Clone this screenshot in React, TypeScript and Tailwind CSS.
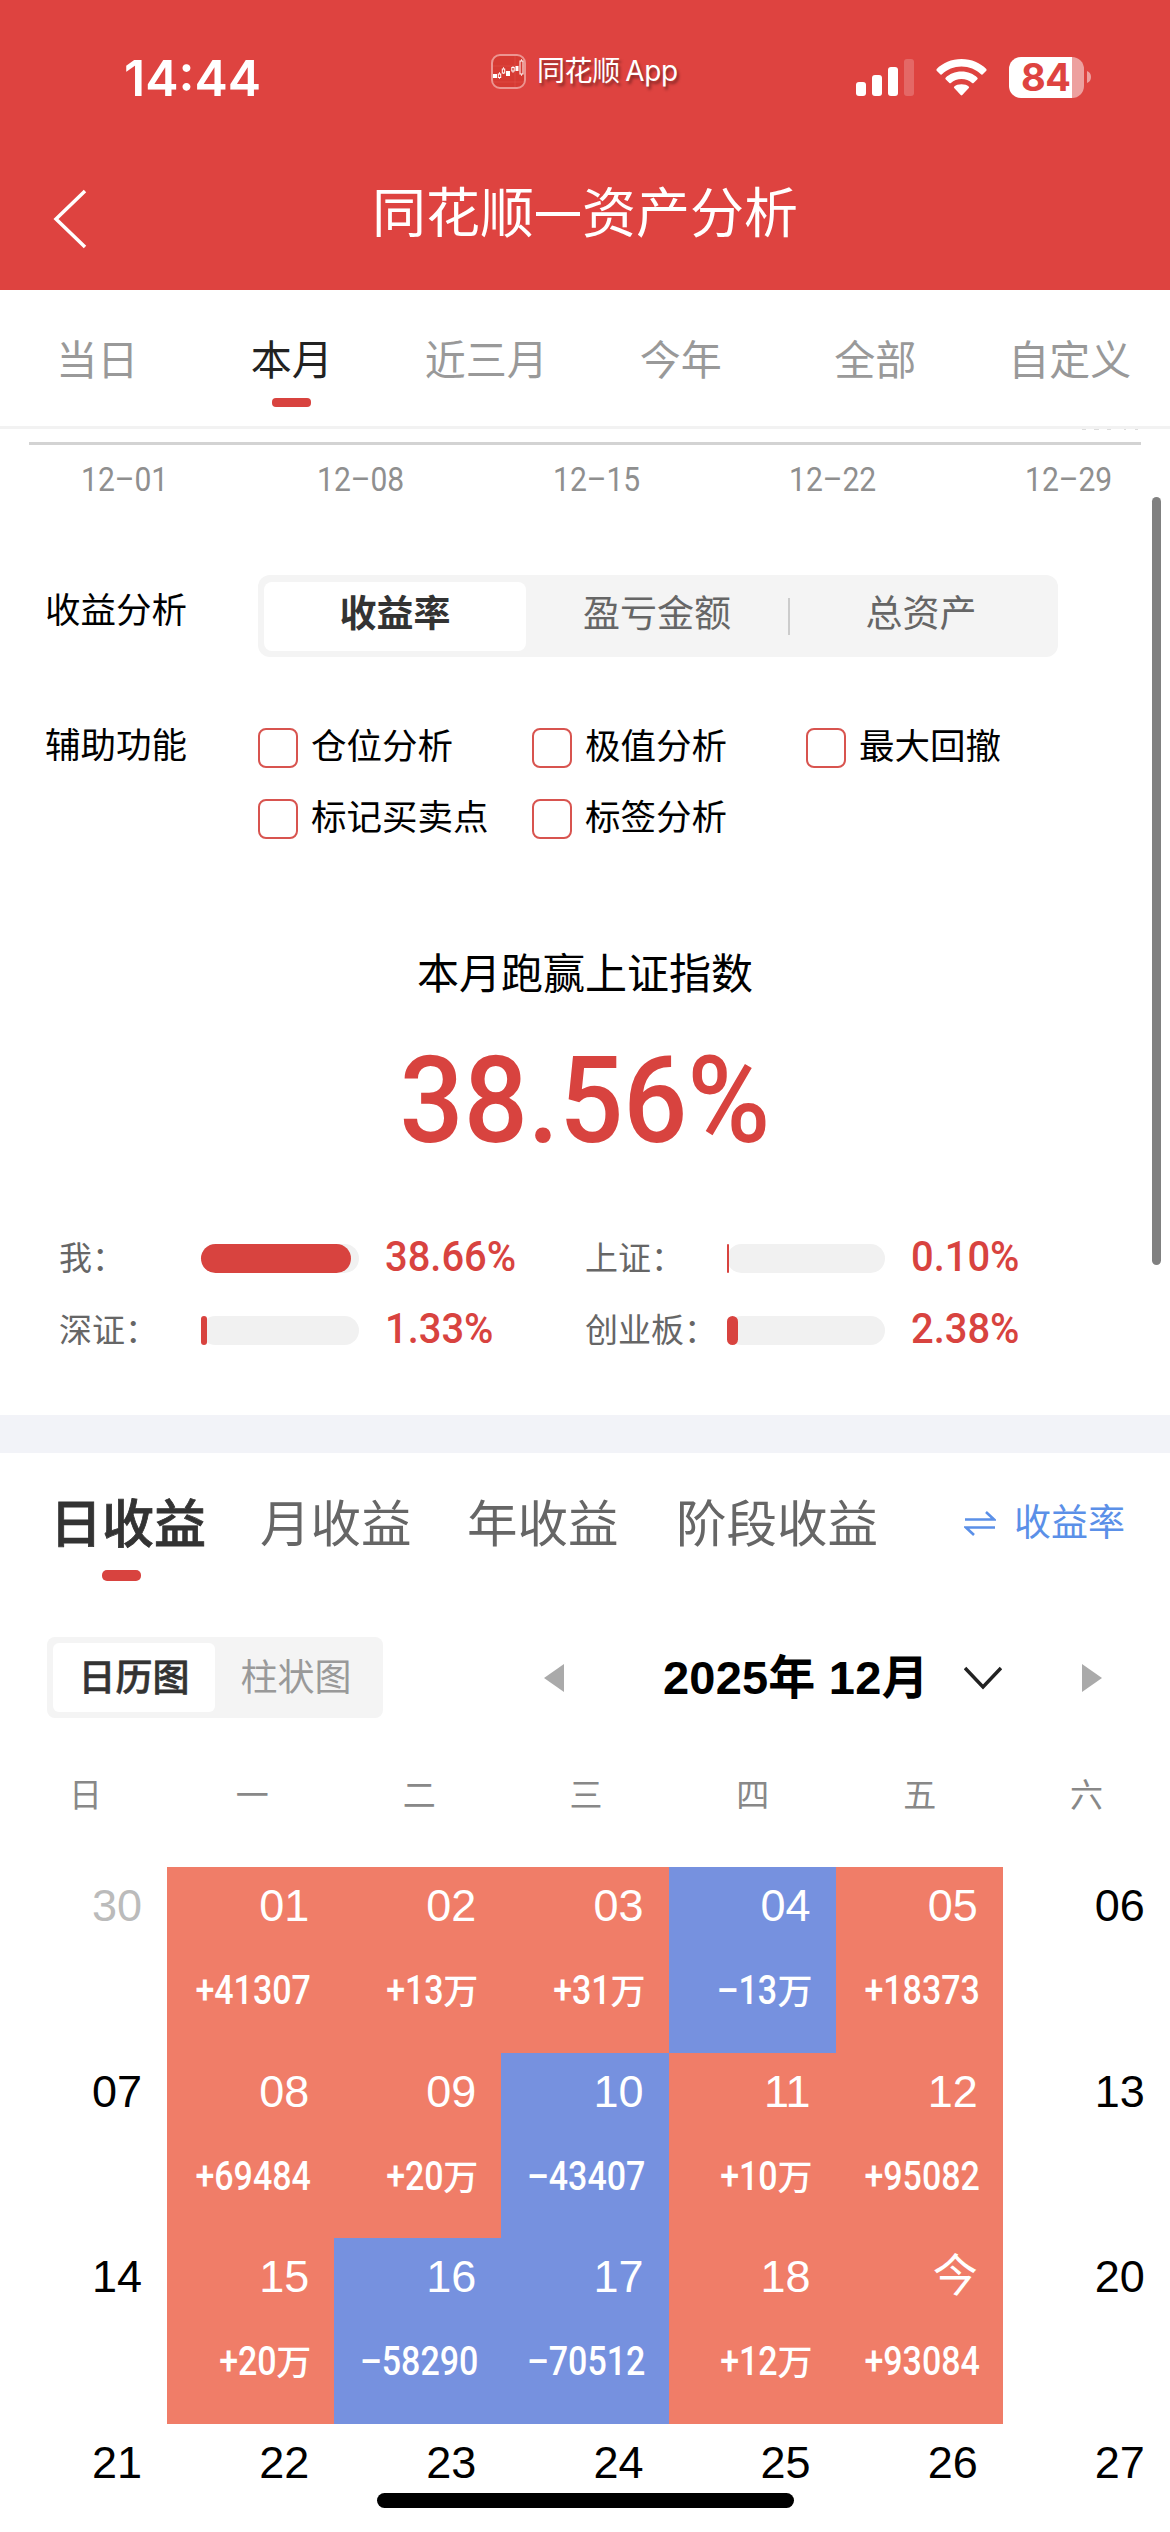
import clsx from 'clsx';

const PERIODS = ['当日', '本月', '近三月', '今年', '全部', '自定义'];
const DATES = ['12–01', '12–08', '12–15', '12–22', '12–29'];
const HELPERS = ['仓位分析', '极值分析', '最大回撤', '标记买卖点', '标签分析'];
const WEEKDAYS = ['日', '一', '二', '三', '四', '五', '六'];

type Index = { name: string; value: string; width: number };

const INDEXES: Index[] = [
  { name: '我：', value: '38.66%', width: 150 },
  { name: '上证：', value: '0.10%', width: 2 },
  { name: '深证：', value: '1.33%', width: 6 },
  { name: '创业板：', value: '2.38%', width: 11 },
];

type Day = { day: string; amount?: string; muted?: boolean };

const DAYS: Day[] = [
  { day: '30', muted: true },
  { day: '01', amount: '+41307' },
  { day: '02', amount: '+13万' },
  { day: '03', amount: '+31万' },
  { day: '04', amount: '–13万' },
  { day: '05', amount: '+18373' },
  { day: '06' },
  { day: '07' },
  { day: '08', amount: '+69484' },
  { day: '09', amount: '+20万' },
  { day: '10', amount: '–43407' },
  { day: '11', amount: '+10万' },
  { day: '12', amount: '+95082' },
  { day: '13' },
  { day: '14' },
  { day: '15', amount: '+20万' },
  { day: '16', amount: '–58290' },
  { day: '17', amount: '–70512' },
  { day: '18', amount: '+12万' },
  { day: '今', amount: '+93084' },
  { day: '20' },
  { day: '21' },
  { day: '22' },
  { day: '23' },
  { day: '24' },
  { day: '25' },
  { day: '26' },
  { day: '27' },
];

export default function App() {
  return (
    <div className="relative flex h-[2532px] w-[1170px] flex-col overflow-hidden bg-white font-['Inter','Noto_Sans_CJK_SC',sans-serif] leading-none whitespace-nowrap text-black">
      <header className="h-[290px] shrink-0 bg-[#de4340] text-white">
        <StatusBar />
        <NavBar />
      </header>
      <PeriodTabs />
      <ChartAxis />
      <AnalysisOptions />
      <Outperform />
      <div className="h-[38px] shrink-0 bg-[#f2f3f8]" />
      <IncomeTabs />
      <CalendarToolbar />
      <Calendar />
      <div className="absolute top-[497px] left-[1152px] h-[768px] w-[9px] rounded-full bg-[#808080]" />
      <div className="absolute bottom-[24px] left-[377px] h-[15px] w-[417px] rounded-full bg-black" />
    </div>
  );
}

function StatusBar() {
  return (
    <div className="flex h-[154px] items-start">
      <div className="w-[491px] pt-[53px] pl-[124px] text-[50px] font-semibold">14:44</div>
      <div className="flex w-[365px] items-center pt-[53px]">
        <AppIcon />
        <span className="ml-[11px] text-[28px] leading-[36px] tracking-[-0.400px] [text-shadow:2px_3px_3px_rgba(0,0,0,0.4)] [word-spacing:-2px]">
          同花顺 App
        </span>
      </div>
      <div className="flex pt-[57px]">
        <svg width="58" height="41" viewBox="0 0 58 41" fill="#fff">
          <rect x="0" y="25" width="10" height="14" rx="3" />
          <rect x="16" y="18" width="10" height="21" rx="3" />
          <rect x="32" y="10" width="10" height="29" rx="3" />
          <rect x="48" y="2" width="10" height="37" rx="3" opacity="0.2" />
        </svg>
        <svg className="ml-[22px]" width="51" height="41" viewBox="0 0 51 41" fill="#fff">
          <path d="M25.500 2C35.500 2 44.500 6 50.300 12Q51 13 50.300 13.800L46.500 17.400Q45.700 18 45 17.300C40 12.400 33 9.500 25.500 9.500S11 12.400 6 17.300Q5.300 18 4.500 17.400L.7 13.800Q0 13 .7 12C6.500 6 15.500 2 25.500 2Z" />
          <path d="M25.500 14.600C32 14.600 37.500 17 41.400 20.800Q42 21.600 41.400 22.300L37.600 26Q36.900 26.700 36.100 26C33.300 23.500 29.500 22.100 25.500 22.100S17.700 23.500 14.900 26Q14.100 26.700 13.400 26L9.600 22.300Q9 21.600 9.600 20.800C13.500 17 19 14.600 25.500 14.600Z" />
          <path d="M25.500 27.200C28.600 27.200 31 28 32.700 29.400Q33.500 30.200 32.800 31L26.300 38Q25.500 38.800 24.700 38L18.200 31Q17.500 30.200 18.300 29.400C20 28 22.400 27.200 25.500 27.200Z" />
        </svg>
        <div className="ml-[22px] h-[41px] w-[75px] rounded-[12px] bg-[linear-gradient(to_right,#fff_63px,#eda09f_63px)] pl-[12px] text-[38px] leading-[41px] font-bold tracking-[-0.5px] text-[#de4340]">
          84
        </div>
        <svg className="mt-[14px] ml-[3px]" width="4" height="12" viewBox="0 0 4 12" fill="#eda09f">
          <path d="M0 0Q4 1.500 4 6T0 12Z" />
        </svg>
      </div>
    </div>
  );
}

function AppIcon() {
  return (
    <svg width="35" height="35" viewBox="0 0 35 35" fill="none">
      <rect x="1" y="1" width="33" height="33" rx="8" fill="#d63a33" stroke="#ec9591" strokeWidth="2" />
      <path d="M2 12H33M2 28H33M24 2V33" stroke="#e0524c" strokeWidth="0.600" />
      <g fill="#fff">
        <rect x="2" y="20" width="4" height="4" />
        <rect x="15" y="17" width="4" height="5" />
        <rect x="24.500" y="12" width="3" height="5" />
      </g>
      <g stroke="#fff" strokeWidth="1">
        <path d="M8.500 18V25M12.500 13V20M22 12V19M30.500 5V22" strokeWidth="0.700" />
        <rect x="7.300" y="20" width="2.400" height="3.500" fill="#d63a33" />
        <rect x="11.300" y="15" width="2.400" height="4" fill="#d63a33" />
        <rect x="20.800" y="13.500" width="2.400" height="3.500" fill="#d63a33" />
        <rect x="29" y="7" width="3" height="13" fill="#d63a33" />
      </g>
    </svg>
  );
}

function NavBar() {
  return (
    <div className="flex h-[120px] items-center">
      <svg className="mt-[10px] ml-[53px]" width="35" height="60" viewBox="0 0 35 60" fill="none">
        <path d="M32 2L3 30L32 58" stroke="#fff" strokeWidth="3.500" />
      </svg>
      <h1 className="ml-[284px] flex items-center text-[54px]">
        同花顺
        <span className="mx-[2px] h-[4px] w-[44px] bg-white" />
        资产分析
      </h1>
    </div>
  );
}

function PeriodTabs() {
  return (
    <nav className="grid h-[139px] shrink-0 grid-cols-[repeat(6,194.500px)] border-b-[3px] border-[#f2f2f2] text-[41px] text-[#999]">
      {PERIODS.map((label) => {
        const active = label === '本月';
        return (
          <div key={label} className={clsx('flex flex-col items-center pt-[50px]', active && 'text-[#222]')}>
            {label}
            {active && <span className="mt-[17px] h-[9px] w-[39px] rounded-[4px] bg-[#d8433f]" />}
          </div>
        );
      })}
    </nav>
  );
}

function ChartAxis() {
  return (
    <div className="h-[146px] shrink-0 px-[29px]">
      {/* tail of the last axis value, scrolled under the tabs */}
      <svg className="ml-[1052px]" width="58" height="13" viewBox="0 0 58 13" fill="#ddd">
        <path d="M1 0h4v1h-4zM13 0h5v1h-5zM26 0h4v1h-4zM43 0h2v1h-2zM54 0h3v1h-3z" />
      </svg>
      <div className="flex justify-between border-t-[3px] border-[#d3d3d3] pt-[18px] pr-[32px] pl-[52px] font-['Roboto',sans-serif] text-[33px] text-[#8f8f8f]">
        {DATES.map((date) => (
          <span key={date} className="w-[84px] origin-left scale-x-[0.910]">
            {date}
          </span>
        ))}
      </div>
    </div>
  );
}

function AnalysisOptions() {
  return (
    <section className="h-[353px] shrink-0 pl-[45px] text-[35.500px]">
      <div className="flex h-[82px] items-center">
        <span className="w-[213px] pb-[11px]">收益分析</span>
        <div className="flex h-[82px] w-[800px] items-center rounded-[12px] bg-[#f4f4f4] p-[6px] text-[37px] text-[#666]">
          <span className="flex h-[69px] w-[262px] items-center justify-center rounded-[8px] bg-white pb-[6px] font-bold text-[#333]">
            收益率
          </span>
          <span className="flex-1 pb-[6px] text-center">盈亏金额</span>
          <span className="h-[37px] w-[2px] bg-[#ccc]" />
          <span className="flex-1 pb-[6px] text-center">总资产</span>
        </div>
      </div>
      <div className="mt-[71px] flex">
        <span className="w-[213px]">辅助功能</span>
        <div className="grid grid-cols-[274px_274px_274px] gap-y-[31px]">
          {HELPERS.map((label) => (
            <label key={label} className="flex h-[40px] items-center gap-[13px]">
              <span className="size-[40px] rounded-[8px] border-2 border-[#d8544f]" />
              <span className="pb-[3px]">{label}</span>
            </label>
          ))}
        </div>
      </div>
    </section>
  );
}

function Outperform() {
  return (
    <section className="h-[487px] shrink-0">
      <div className="pt-[25px] text-center text-[42px]">本月跑赢上证指数</div>
      <div className="mt-[46px] scale-x-[0.940] text-center font-['Roboto',sans-serif] text-[120px] font-medium text-[#d8433f]">
        38.56%
      </div>
      <div className="mt-[80px] grid grid-cols-[526px_526px] gap-y-[38px] pl-[59px]">
        {INDEXES.map((item) => (
          <IndexBar key={item.name} {...item} />
        ))}
      </div>
    </section>
  );
}

function IndexBar({ name, value, width }: Index) {
  return (
    <div className="flex h-[34px] items-center">
      <span className="w-[142px] text-[33px] text-[#666]">{name}</span>
      <span className="h-[29px] w-[158px] rounded-full bg-[#f1f1f1]">
        <span className="block h-full rounded-full bg-[#d8433f]" style={{ width }} />
      </span>
      <span className="ml-[26px] origin-left scale-x-[0.950] pb-[3px] font-['Roboto',sans-serif] text-[42px] font-medium text-[#d8433f]">
        {value}
      </span>
    </div>
  );
}

function IncomeTabs() {
  return (
    <div className="flex h-[184px] shrink-0 items-start pt-[46px] pl-[50px] text-[50.500px] text-[#666]">
      <div className="flex w-[210px] flex-col text-[52px] font-medium text-[#333] [-webkit-text-stroke:0.8px]">
        日收益
        <span className="mt-[19px] ml-[52px] h-[11px] w-[39px] rounded-[5px] bg-[#d8433f]" />
      </div>
      <span className="w-[207px]">月收益</span>
      <span className="w-[209px]">年收益</span>
      <span className="w-[288px]">阶段收益</span>
      <span className="flex items-center pt-[5px] text-[37px] text-[#5b90e8]">
        <svg className="mr-[18px]" width="32" height="26" viewBox="0 0 32 26" fill="none" stroke="currentColor" strokeWidth="2.600">
          <path d="M1 9.500H30L22 2M31 17.500H2L10 25" />
        </svg>
        收益率
      </span>
    </div>
  );
}

function CalendarToolbar() {
  return (
    <div className="flex h-[81px] shrink-0 items-center pl-[47px]">
      <div className="flex h-[81px] w-[336px] items-center rounded-[8px] bg-[#f4f4f4] p-[6px] text-[37px] text-[#999]">
        <span className="flex h-[69px] w-[162px] items-center justify-center rounded-[6px] bg-white font-medium text-[#333] [-webkit-text-stroke:0.6px]">
          日历图
        </span>
        <span className="flex-1 text-center">柱状图</span>
      </div>
      <svg className="ml-[161px]" width="20" height="28" viewBox="0 0 20 28" fill="#aaa">
        <path d="M20 0V28L0 14Z" />
      </svg>
      <span className="ml-[99px] w-[301px] font-['Liberation_Sans','Noto_Sans_CJK_SC',sans-serif] text-[47px] font-bold tracking-[0.200px]">
        2025年 12月
      </span>
      <svg width="38" height="24" viewBox="0 0 38 24" fill="none">
        <path d="M1 2L19 21L37 2" stroke="#222" strokeWidth="3.500" />
      </svg>
      <svg className="ml-[80px]" width="20" height="28" viewBox="0 0 20 28" fill="#aaa">
        <path d="M0 0V28L20 14Z" />
      </svg>
    </div>
  );
}

function Calendar() {
  return (
    <section className="pt-[61px]">
      <div className="flex h-[88px] pl-[2px] text-[33px] text-[#888]">
        {WEEKDAYS.map((label) => (
          <span key={label} className="w-[167px] text-center">
            {label}
          </span>
        ))}
      </div>
      <div className="grid auto-rows-[185.500px] grid-cols-[repeat(7,167.140px)]">
        {DAYS.map((item) => (
          <DayCell key={item.day} {...item} />
        ))}
      </div>
    </section>
  );
}

function DayCell({ day, amount, muted }: Day) {
  const wan = amount?.endsWith('万');
  return (
    <div
      className={clsx(
        'flex flex-col items-end pt-[16px] pr-[25px]',
        muted && 'text-[#bbb]',
        amount && 'text-white',
        amount && (amount.startsWith('+') ? 'bg-[#f07d68]' : 'bg-[#7691df]'),
      )}
    >
      <span className="h-[88px] font-['Liberation_Sans','Noto_Sans_CJK_SC',sans-serif] text-[45px]">{day}</span>
      {amount && (
        <span className="-mr-[2px] flex items-baseline font-['Roboto','Noto_Sans_CJK_SC',sans-serif] text-[35px] font-medium">
          <span className="origin-right scale-x-[0.850] text-[40px]">{amount.replace('万', '')}</span>
          {wan && '万'}
        </span>
      )}
    </div>
  );
}
